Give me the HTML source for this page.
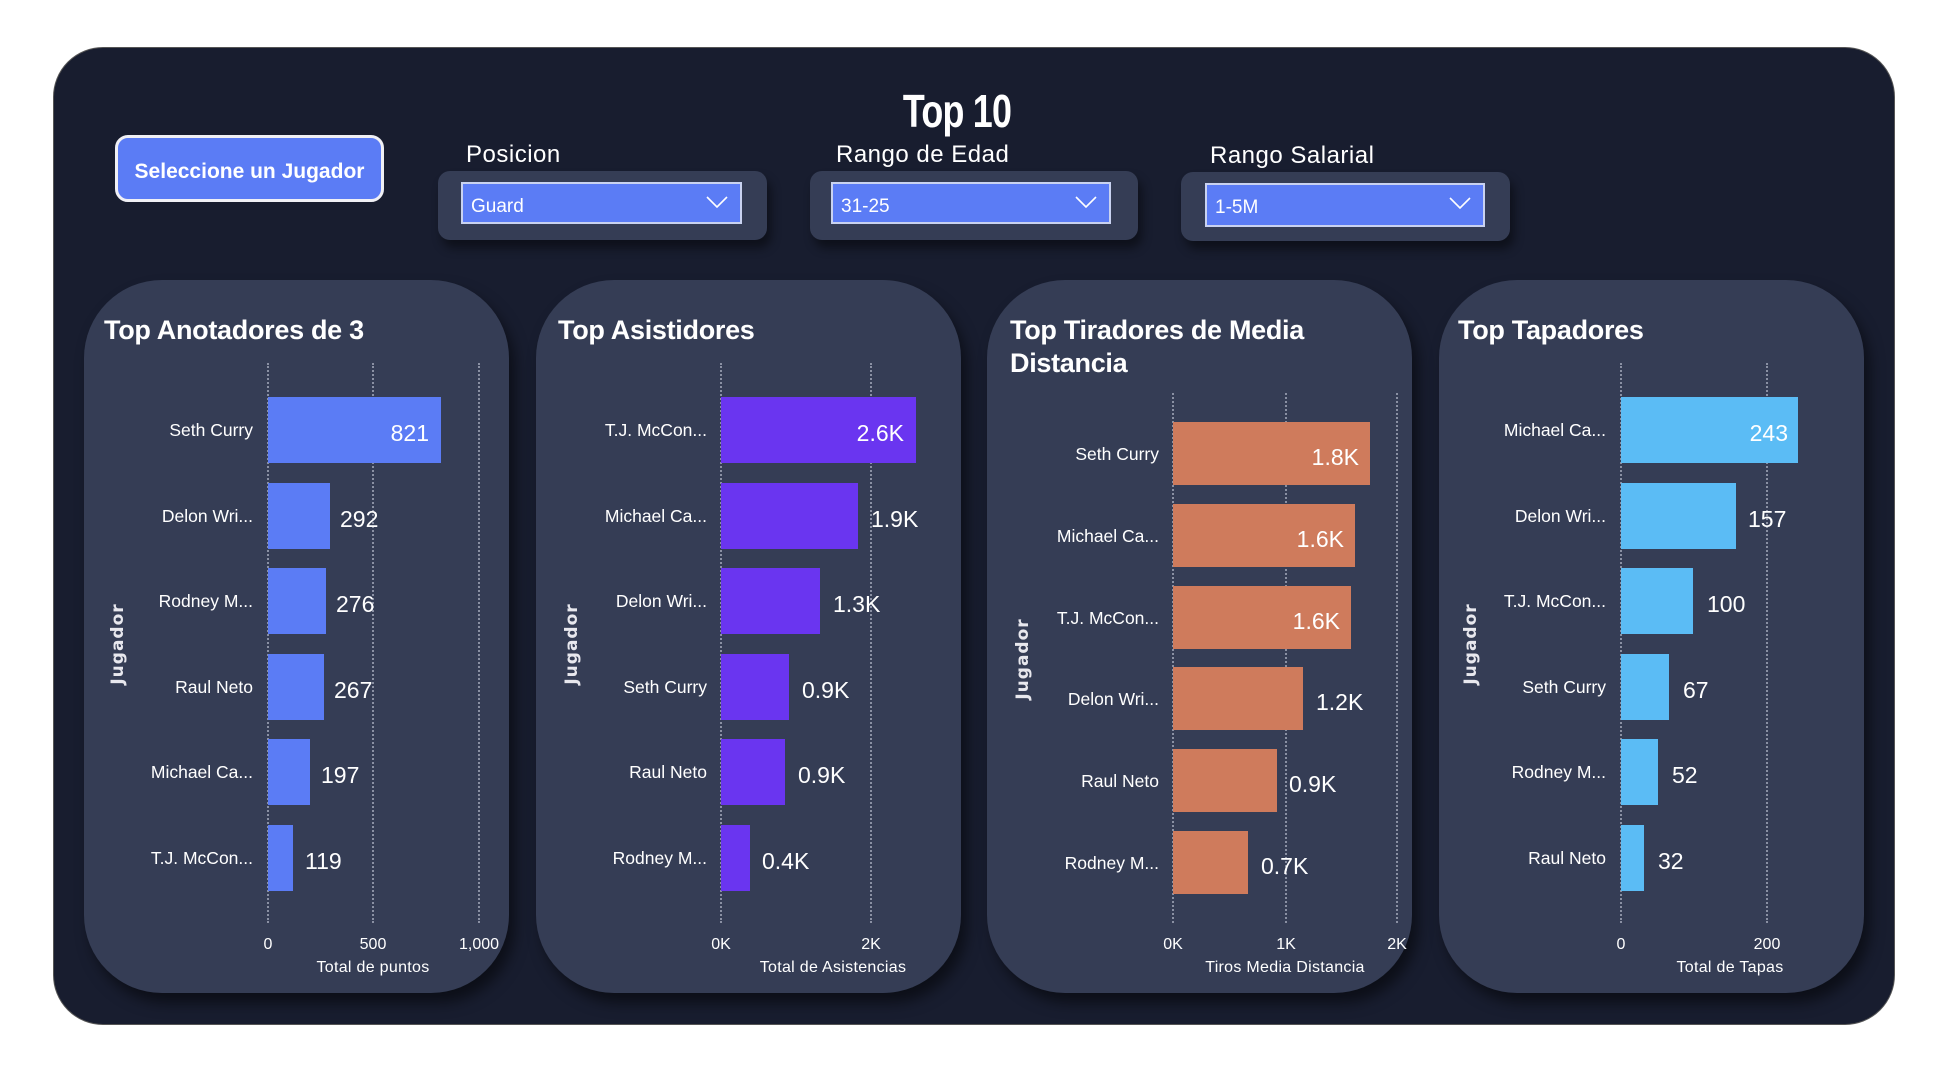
<!DOCTYPE html>
<html><head><meta charset="utf-8"><style>
*{margin:0;padding:0;box-sizing:border-box}
body{width:1942px;height:1076px;background:#fff;position:relative;overflow:hidden;font-family:"Liberation Sans",sans-serif;color:#fff}
.a{position:absolute}
.outer{left:53px;top:47px;width:1842px;height:978px;background:#181d2f;border-radius:50px;border:1px solid #555}
.title{left:857px;top:84px;width:200px;text-align:center;font-size:46px;font-weight:bold;transform:scaleX(.78);letter-spacing:-1px}
.btn{left:115px;top:135px;width:269px;height:67px;background:#5b7cf5;border:3px solid #f0f0f5;border-radius:13px;font-size:21px;font-weight:bold;text-align:center;line-height:68px}
.lbl{font-size:24px;letter-spacing:.5px}
.slc{background:#353d55;border-radius:12px;box-shadow:4px 8px 10px rgba(0,0,0,.45)}
.dd{background:#5b7cf5;border:2px solid #c9d2f0;font-size:19px;line-height:45px;padding-left:8px}
.chev{position:absolute;right:12px;top:12px;width:22px;height:12px}
.card{top:280px;height:713px;width:425px;background:#353d55;border-radius:78px;box-shadow:6px 10px 14px rgba(0,0,0,.5)}
.ct{font-size:27px;font-weight:bold;line-height:33px;letter-spacing:-.3px}
.g{width:0;border-left:2px dotted #8a90a3}
.nm{width:200px;text-align:right;font-size:17.5px;line-height:22px}
.v{font-size:23px;line-height:26px}
.vi{width:100px;text-align:right;font-size:23px;line-height:26px}
.tk{font-size:16px;width:60px;text-align:center}
.ax{font-size:16px;width:260px;text-align:center;letter-spacing:.3px}
.jg{font-family:"DejaVu Sans",sans-serif;font-size:17px;font-weight:bold;letter-spacing:1px;transform:rotate(-90deg);width:100px;text-align:center;color:#e8e8ee}
</style></head><body>
<div class="a outer"></div>
<div class="a title">Top 10</div>
<div class="a btn">Seleccione un Jugador</div>

<div class="a lbl" style="left:466px;top:141px">Posicion</div>
<div class="a slc" style="left:438px;top:171px;width:329px;height:69px"></div>
<div class="a dd" style="left:461px;top:182px;width:281px;height:42px">Guard<svg class="chev" viewBox="0 0 22 12"><path d="M1 1L11 11L21 1" fill="none" stroke="#fff" stroke-width="1.6"/></svg></div>

<div class="a lbl" style="left:836px;top:141px">Rango de Edad</div>
<div class="a slc" style="left:810px;top:171px;width:328px;height:69px"></div>
<div class="a dd" style="left:831px;top:182px;width:280px;height:42px">31-25<svg class="chev" viewBox="0 0 22 12"><path d="M1 1L11 11L21 1" fill="none" stroke="#fff" stroke-width="1.6"/></svg></div>

<div class="a lbl" style="left:1210px;top:142px">Rango Salarial</div>
<div class="a slc" style="left:1181px;top:172px;width:329px;height:69px"></div>
<div class="a dd" style="left:1205px;top:183px;width:280px;height:44px">1-5M<svg class="chev" viewBox="0 0 22 12"><path d="M1 1L11 11L21 1" fill="none" stroke="#fff" stroke-width="1.6"/></svg></div>

<!-- Card 1 -->
<div class="a card" style="left:84px"></div>
<div class="a ct" style="left:104px;top:314px">Top Anotadores de 3</div>
<div class="a g" style="left:267px;top:363px;height:560px"></div>
<div class="a g" style="left:372px;top:363px;height:560px"></div>
<div class="a g" style="left:478px;top:363px;height:560px"></div>
<div class="a jg" style="left:68px;top:634px">Jugador</div>
<div class="a" style="left:268px;top:397px;width:173px;height:66px;background:#5b7cf5"></div>
<div class="a" style="left:268px;top:483px;width:62px;height:66px;background:#5b7cf5"></div>
<div class="a" style="left:268px;top:568px;width:58px;height:66px;background:#5b7cf5"></div>
<div class="a" style="left:268px;top:654px;width:56px;height:66px;background:#5b7cf5"></div>
<div class="a" style="left:268px;top:739px;width:42px;height:66px;background:#5b7cf5"></div>
<div class="a" style="left:268px;top:825px;width:25px;height:66px;background:#5b7cf5"></div>
<div class="a nm" style="left:53px;top:419px">Seth Curry</div>
<div class="a nm" style="left:53px;top:505px">Delon Wri...</div>
<div class="a nm" style="left:53px;top:590px">Rodney M...</div>
<div class="a nm" style="left:53px;top:676px">Raul Neto</div>
<div class="a nm" style="left:53px;top:761px">Michael Ca...</div>
<div class="a nm" style="left:53px;top:847px">T.J. McCon...</div>
<div class="a vi" style="left:329px;top:420px">821</div>
<div class="a v" style="left:340px;top:506px">292</div>
<div class="a v" style="left:336px;top:591px">276</div>
<div class="a v" style="left:334px;top:677px">267</div>
<div class="a v" style="left:321px;top:762px">197</div>
<div class="a v" style="left:305px;top:848px">119</div>
<div class="a tk" style="left:238px;top:936px">0</div>
<div class="a tk" style="left:343px;top:936px">500</div>
<div class="a tk" style="left:449px;top:936px">1,000</div>
<div class="a ax" style="left:243px;top:959px">Total de puntos</div>

<!-- Card 2 -->
<div class="a card" style="left:536px"></div>
<div class="a ct" style="left:558px;top:314px">Top Asistidores</div>
<div class="a g" style="left:720px;top:363px;height:560px"></div>
<div class="a g" style="left:870px;top:363px;height:560px"></div>
<div class="a jg" style="left:522px;top:634px">Jugador</div>
<div class="a" style="left:721px;top:397px;width:195px;height:66px;background:#6a35f0"></div>
<div class="a" style="left:721px;top:483px;width:137px;height:66px;background:#6a35f0"></div>
<div class="a" style="left:721px;top:568px;width:99px;height:66px;background:#6a35f0"></div>
<div class="a" style="left:721px;top:654px;width:68px;height:66px;background:#6a35f0"></div>
<div class="a" style="left:721px;top:739px;width:64px;height:66px;background:#6a35f0"></div>
<div class="a" style="left:721px;top:825px;width:29px;height:66px;background:#6a35f0"></div>
<div class="a nm" style="left:507px;top:419px">T.J. McCon...</div>
<div class="a nm" style="left:507px;top:505px">Michael Ca...</div>
<div class="a nm" style="left:507px;top:590px">Delon Wri...</div>
<div class="a nm" style="left:507px;top:676px">Seth Curry</div>
<div class="a nm" style="left:507px;top:761px">Raul Neto</div>
<div class="a nm" style="left:507px;top:847px">Rodney M...</div>
<div class="a vi" style="left:804px;top:420px">2.6K</div>
<div class="a v" style="left:871px;top:506px">1.9K</div>
<div class="a v" style="left:833px;top:591px">1.3K</div>
<div class="a v" style="left:802px;top:677px">0.9K</div>
<div class="a v" style="left:798px;top:762px">0.9K</div>
<div class="a v" style="left:762px;top:848px">0.4K</div>
<div class="a tk" style="left:691px;top:936px">0K</div>
<div class="a tk" style="left:841px;top:936px">2K</div>
<div class="a ax" style="left:703px;top:959px">Total de Asistencias</div>

<!-- Card 3 -->
<div class="a card" style="left:987px"></div>
<div class="a ct" style="left:1010px;top:314px">Top Tiradores de Media<br>Distancia</div>
<div class="a g" style="left:1172px;top:393px;height:530px"></div>
<div class="a g" style="left:1285px;top:393px;height:530px"></div>
<div class="a g" style="left:1396px;top:393px;height:530px"></div>
<div class="a jg" style="left:973px;top:649px">Jugador</div>
<div class="a" style="left:1173px;top:422px;width:197px;height:63px;background:#cf7b5c"></div>
<div class="a" style="left:1173px;top:504px;width:182px;height:63px;background:#cf7b5c"></div>
<div class="a" style="left:1173px;top:586px;width:178px;height:63px;background:#cf7b5c"></div>
<div class="a" style="left:1173px;top:667px;width:130px;height:63px;background:#cf7b5c"></div>
<div class="a" style="left:1173px;top:749px;width:104px;height:63px;background:#cf7b5c"></div>
<div class="a" style="left:1173px;top:831px;width:75px;height:63px;background:#cf7b5c"></div>
<div class="a nm" style="left:959px;top:443px">Seth Curry</div>
<div class="a nm" style="left:959px;top:525px">Michael Ca...</div>
<div class="a nm" style="left:959px;top:607px">T.J. McCon...</div>
<div class="a nm" style="left:959px;top:688px">Delon Wri...</div>
<div class="a nm" style="left:959px;top:770px">Raul Neto</div>
<div class="a nm" style="left:959px;top:852px">Rodney M...</div>
<div class="a vi" style="left:1259px;top:444px">1.8K</div>
<div class="a vi" style="left:1244px;top:526px">1.6K</div>
<div class="a vi" style="left:1240px;top:608px">1.6K</div>
<div class="a v" style="left:1316px;top:689px">1.2K</div>
<div class="a v" style="left:1289px;top:771px">0.9K</div>
<div class="a v" style="left:1261px;top:853px">0.7K</div>
<div class="a tk" style="left:1143px;top:936px">0K</div>
<div class="a tk" style="left:1256px;top:936px">1K</div>
<div class="a tk" style="left:1367px;top:936px">2K</div>
<div class="a ax" style="left:1155px;top:959px">Tiros Media Distancia</div>

<!-- Card 4 -->
<div class="a card" style="left:1439px"></div>
<div class="a ct" style="left:1458px;top:314px">Top Tapadores</div>
<div class="a g" style="left:1620px;top:363px;height:560px"></div>
<div class="a g" style="left:1766px;top:363px;height:560px"></div>
<div class="a jg" style="left:1421px;top:634px">Jugador</div>
<div class="a" style="left:1621px;top:397px;width:177px;height:66px;background:#5bbcf5"></div>
<div class="a" style="left:1621px;top:483px;width:115px;height:66px;background:#5bbcf5"></div>
<div class="a" style="left:1621px;top:568px;width:72px;height:66px;background:#5bbcf5"></div>
<div class="a" style="left:1621px;top:654px;width:48px;height:66px;background:#5bbcf5"></div>
<div class="a" style="left:1621px;top:739px;width:37px;height:66px;background:#5bbcf5"></div>
<div class="a" style="left:1621px;top:825px;width:23px;height:66px;background:#5bbcf5"></div>
<div class="a nm" style="left:1406px;top:419px">Michael Ca...</div>
<div class="a nm" style="left:1406px;top:505px">Delon Wri...</div>
<div class="a nm" style="left:1406px;top:590px">T.J. McCon...</div>
<div class="a nm" style="left:1406px;top:676px">Seth Curry</div>
<div class="a nm" style="left:1406px;top:761px">Rodney M...</div>
<div class="a nm" style="left:1406px;top:847px">Raul Neto</div>
<div class="a vi" style="left:1688px;top:420px">243</div>
<div class="a v" style="left:1748px;top:506px">157</div>
<div class="a v" style="left:1707px;top:591px">100</div>
<div class="a v" style="left:1683px;top:677px">67</div>
<div class="a v" style="left:1672px;top:762px">52</div>
<div class="a v" style="left:1658px;top:848px">32</div>
<div class="a tk" style="left:1591px;top:936px">0</div>
<div class="a tk" style="left:1737px;top:936px">200</div>
<div class="a ax" style="left:1600px;top:959px">Total de Tapas</div>
</body></html>
